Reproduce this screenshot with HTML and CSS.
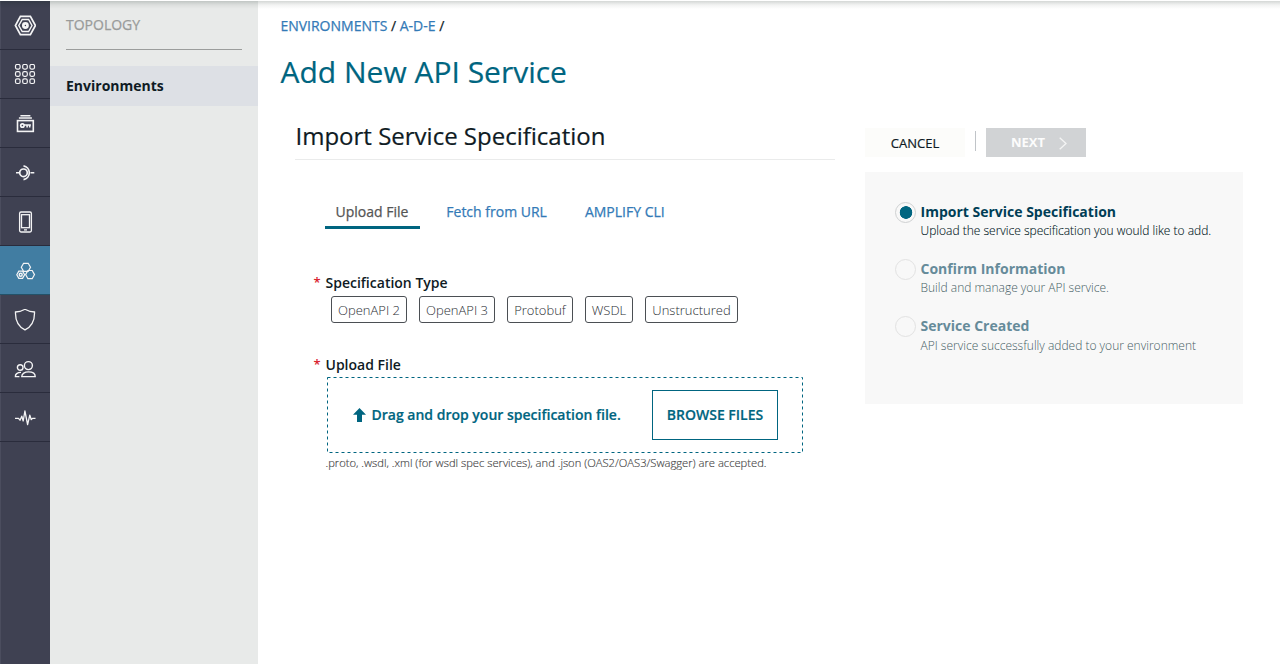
FILE: index.html
```html
<!DOCTYPE html>
<html lang="en">
<head>
<meta charset="utf-8">
<title>Add New API Service</title>
<link rel="stylesheet" href="styles.css">
</head>
<body>
<div class="app">
  <nav class="rail">
    <a class="rail-item"><svg class="icon" viewBox="-.4 .5 22 22"><path d="M6 1.8h10l5 9.2-5 9.2H6L1 11z" stroke-width="1.7"/><path d="M7.8 5h6.4l3.4 6-3.4 6H7.8l-3.4-6z" stroke-width="1.4"/><circle cx="11" cy="11" r="2.1" stroke-width="2.7"/></svg></a>
    <a class="rail-item"><svg class="icon" viewBox="0 1 22 22"><g stroke-width="1.2"><rect x="1.5" y="1.5" width="4.6" height="4.6" rx="1.5"/><rect x="8.7" y="1.5" width="4.6" height="4.6" rx="1.5"/><rect x="15.9" y="1.5" width="4.6" height="4.6" rx="1.5"/><rect x="1.5" y="8.7" width="4.6" height="4.6" rx="1.5"/><rect x="8.7" y="8.7" width="4.6" height="4.6" rx="1.5"/><rect x="15.9" y="8.7" width="4.6" height="4.6" rx="1.5"/><rect x="1.5" y="15.9" width="4.6" height="4.6" rx="1.5"/><rect x="8.7" y="15.9" width="4.6" height="4.6" rx="1.5"/><rect x="15.9" y="15.9" width="4.6" height="4.6" rx="1.5"/></g></svg></a>
    <a class="rail-item"><svg class="icon" viewBox="-.4 0 22 22"><path d="M6 2.7h10M4.500 5h13" stroke-width="1.4"/><rect x="3.1" y="7.6" width="15.8" height="10.8" stroke-width="1.6"/><circle cx="8" cy="12.5" r="1.7" stroke-width="1.7"/><path d="M9.5 12h7M12.7 12v2.6M15.3 12v2.6" stroke-width="1.6"/></svg></a>
    <a class="rail-item"><svg class="icon" viewBox="0 .2 22 22"><circle cx="9.500" cy="11" r="3.8" stroke-width="1.7"/><path d="M2 11h3.700M16.500 11h3.8" stroke-width="1.6"/><path d="M9.500 4.100a7 7 0 0 1 0 13.8" stroke-width="1.7"/></svg></a>
    <a class="rail-item"><svg class="icon" viewBox="-.5 0 22 22"><rect x="5.1" y="1" width="11.8" height="20" rx="1.4" stroke-width="1.3"/><rect x="7" y="3.7" width="8" height="13" stroke-width="1.3"/><path d="M9.5 18.9h3" stroke-width="1.3"/></svg></a>
    <a class="rail-item active"><svg class="icon" viewBox="-.4 0 22 22"><path d="M9.2 3.3h4.6l2.3 4-2.3 4H9.2l-2.3-4z" stroke-width="1.2"/><path d="M13.5 10.5h4.3l2.3 4.1-2.3 4.1h-4.3l-2.3-4.1z" stroke-width="1.2"/><path d="M4.4 11.2h3.8l2 3.6-2 3.6H4.4l-2-3.6z" stroke-width="1.2"/><circle cx="6.3" cy="14.8" r="1.5" stroke-width="1.4"/></svg></a>
    <a class="rail-item"><svg class="icon" viewBox="0 .5 22 22"><path d="M11 .8c3 1.8 6 2.6 9.5 2.7.3 8-2 14-9.5 17.9C3.500 17.500 1.200 11.500 1.500 3.500 5 3.400 8 2.600 11 .8z" stroke-width="1.3"/></svg></a>
    <a class="rail-item"><svg class="icon" viewBox="-.2 0 22 22"><g stroke-width="1.4"><circle cx="14.200" cy="7.600" r="4"/><circle cx="6" cy="9.500" r="2.800"/><path d="M7.600 18.600c0-3 2.900-4.700 6.700-4.700s6.700 1.700 6.700 4.700z"/><path d="M5.200 18.600H1.200c-.2-2.400 1.800-4.200 5.600-4.200"/></g></svg></a>
    <a class="rail-item"><svg class="icon" viewBox="-.2 0 22 22"><path d="M.8 11.300h3.500l1.500 1.900 1.800-4 1.400 4.800 1.700-10L13.400 17.500l2.200-9.300 1.500 4.500 1.200-1.400h3" stroke-width="1.300" stroke-linejoin="round"/></svg></a>
  </nav>

  <aside class="sidebar">
    <div class="sidebar-title">TOPOLOGY</div>
    <a class="sidebar-link">Environments</a>
  </aside>

  <main class="main">
    <div class="breadcrumb"><a>ENVIRONMENTS</a> / <a>A-D-E</a> /</div>
    <h1 class="page-title">Add New API Service</h1>
    <div class="columns">
      <section class="wizard">
        <h2 class="section-title"><span>Import Service Specification</span></h2>
        <div class="tabs">
          <a class="tab selected">Upload File</a>
          <a class="tab">Fetch from URL</a>
          <a class="tab">AMPLIFY CLI</a>
        </div>
        <div class="field-label"><span class="required">*</span>Specification Type</div>
        <div class="chips">
          <span class="chip chip-openapi">OpenAPI 2</span>
          <span class="chip chip-openapi">OpenAPI 3</span>
          <span class="chip chip-protobuf">Protobuf</span>
          <span class="chip chip-wsdl">WSDL</span>
          <span class="chip chip-unstructured">Unstructured</span>
        </div>
        <div class="field-label upload-label"><span class="required">*</span>Upload File</div>
        <div class="dropzone">
          <svg class="dash-frame" viewBox="0 0 476 76"><rect x=".5" y=".5" width="475" height="75" fill="none" stroke="#006580" stroke-dasharray="3 3"/></svg>
          <svg class="arrow" viewBox="0 0 13 14"><path d="M6.500 0 13 6.800H9V14H4V6.800H0z" fill="#006580"/></svg>
          <span class="drop-text">Drag and drop your specification file.</span>
          <a class="browse">BROWSE FILES</a>
        </div>
        <div class="hint">.proto, .wsdl, .xml (for wsdl spec services), and .json (OAS2/OAS3/Swagger) are accepted.</div>
      </section>

      <section class="progress">
        <div class="actions">
          <a class="btn cancel">CANCEL</a>
          <span class="divider"></span>
          <a class="btn next"><span>NEXT</span><svg class="chevron" viewBox="0 0 8 13"><path d="M.7.700 7 6.500.700 12.300" fill="none" stroke="#f4f4f4" stroke-width="1.300"/></svg></a>
        </div>
        <div class="steps">
          <div class="step current"><span class="radio"></span><div><div class="step-title">Import Service Specification</div><div class="step-text">Upload the service specification you would like to add.</div></div></div>
          <div class="step"><span class="radio"></span><div><div class="step-title">Confirm Information</div><div class="step-text">Build and manage your API service.</div></div></div>
          <div class="step last"><span class="radio"></span><div><div class="step-title">Service Created</div><div class="step-text">API service successfully added to your environment</div></div></div>
        </div>
      </section>
    </div>
  </main>
  <div class="top-shadow"></div>
</div>
</body>
</html>
```
FILE: styles.css
```css
* { box-sizing: border-box; }
body {
  margin: 0;
  font-family: "Open Sans", sans-serif;
  font-size: 14px;
  line-height: 20px;
  color: #0f1b24;
  background: #fff;
  overflow: hidden;
}
.app { position: relative; display: flex; height: 664px; }
.top-shadow {
  position: absolute;
  inset: 0 0 auto 0;
  height: 9px;
  border-top: 1px solid #fff;
  background: linear-gradient(rgba(0, 20, 10, .17), rgba(0, 20, 10, .05) 50%, rgba(0, 20, 10, 0));
}

.rail {
  width: 50px;
  flex: none;
  padding-top: 1px;
  background: #3f4152;
  box-shadow: inset 1px 0 #4b4d5e;
}
.rail-item {
  display: flex;
  align-items: center;
  justify-content: center;
  height: 49px;
  padding-top: 2px;
  border-bottom: 1px solid #2a2c3c;
}
.rail-item.active { background: #417da2; border-bottom-color: #235269; }
.icon { width: 22px; height: 22px; fill: none; stroke: #f4f4f5; }

.sidebar { width: 208px; flex: none; background: #e8eae9; }
.sidebar-title {
  height: 50px;
  margin: 0 16px;
  padding-top: 15px;
  color: #999b9a;
  border-bottom: 1px solid #9b9d9c;
}
.sidebar-link {
  display: block;
  height: 40px;
  margin-top: 16px;
  padding: 10px 16px;
  background: #dde0e5;
  font-weight: 700;
}

.main { flex: 1; min-width: 0; padding: 16px 0 0 22px; }
.breadcrumb { padding-left: .4px; }
.breadcrumb a, .tab { color: #337ab7; }
.breadcrumb, .tab, .sidebar-title { -webkit-text-stroke: .25px; }
.page-title, .section-title { -webkit-text-stroke: .2px; text-indent: .5px; }
.page-title {
  margin: 16px 0 0;
  height: 40px;
  line-height: 40px;
  font-size: 30px;
  font-weight: 400;
  color: #006580;
}
.columns { display: flex; padding-left: 15px; }
.wizard { width: 540px; flex: none; padding-top: 28px; }
.section-title {
  margin: 0;
  height: 40px;
  line-height: 32px;
  font-size: 24px;
  font-weight: 400;
  border-bottom: 1px solid #eaebeb;
}

.tabs { display: flex; height: 28px; margin: 41px 0 0 30px; }
.tab { margin-right: 38px; line-height: 22px; }
.tab.selected {
  width: 95px;
  margin-right: 26.300px;
  padding-right: 1px;
  text-align: center;
  color: #555;
  border-bottom: 3px solid #006580;
}
.field-label { margin-top: 44px; padding-left: 18.500px; font-weight: 600; line-height: 20px; }
.required {
  display: inline-block;
  width: 12px;
  color: #d9232e;
  font-size: 13px;
  line-height: 16px;
  vertical-align: 1px;
}
.chips { display: flex; gap: 12px; padding-left: 36px; margin-top: 3px; }
.chip {
  height: 27px;
  line-height: 27px;
  border: 1px solid #4b4f54;
  border-radius: 3px;
  font-size: 13px;
  font-weight: 300;
  text-align: center;
  color: #2c3035;
  white-space: nowrap;
}
.chip-openapi { width: 76px; }
.chip-protobuf { width: 66px; }
.chip-wsdl { width: 48px; }
.chip-unstructured { width: 93px; }

.upload-label { margin-top: 32px; }
.dropzone {
  position: relative;
  display: flex;
  align-items: center;
  width: 476px;
  height: 76px;
  margin: 2px 0 0 32px;
  padding: 0 25px 0 26px;
  color: #006580;
  font-weight: 600;
  -webkit-text-stroke: .2px;
}
.dash-frame { position: absolute; inset: 0; width: 476px; height: 76px; }
.arrow { width: 13px; height: 14px; margin-right: 5.500px; }
.drop-text { white-space: nowrap; }
.browse {
  width: 126px;
  height: 50px;
  margin-left: auto;
  line-height: 48px;
  text-align: center;
  border: 1px solid #006580;
}
.hint {
  padding-left: 30.500px;
  font-size: 11.200px;
  font-weight: 300;
  color: #444;
  white-space: nowrap;
  -webkit-text-stroke: .15px;
}

.progress { margin-left: 30px; width: 378px; padding-top: 36px; }
.actions { display: flex; }
.btn { width: 100px; height: 29px; line-height: 31px; font-size: 13px; text-align: center; }
.cancel { background: #fcfcfa; -webkit-text-stroke: .2px; }
.divider { width: 1px; height: 20px; margin: 3px 10px; background: #c0c4c8; }
.next {
  display: flex;
  align-items: center;
  gap: 14px;
  padding-left: 25px;
  background: #d1d3d5;
  color: #fcfcfc;
  font-weight: 700;
}
.chevron { width: 8px; height: 13px; margin-top: 2px; }
.steps { height: 232px; margin-top: 15px; padding: 30px 0 0 30px; background: #f8f8f8; }
.step { display: flex; height: 57px; gap: 4.500px; white-space: nowrap; }
.radio { width: 21px; height: 21px; flex: none; border: 1px solid #e2e2e2; border-radius: 50%; }
.step-title { font-weight: 700; color: #668b9a; line-height: 20px; }
.step-text { font-size: 12px; font-weight: 300; color: #465e65; line-height: 18px; }
.last .step-text { padding-top: 1px; }
.current .radio {
  border-color: #cfd1d2;
  background: radial-gradient(circle at 10px 9.500px, #006580 6px, transparent 6.600px);
}
.current .step-title { color: #003e56; }
.current .step-text { color: #001722; -webkit-text-stroke: .1px; }
```
